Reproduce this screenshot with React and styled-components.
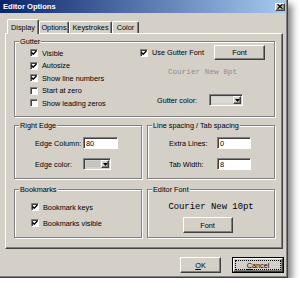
import React from 'react';
import styled, { createGlobalStyle, css } from 'styled-components';

const face = '#d4d0c8';
const shadow = '#808080';
const darkShadow = '#404040';
const highlight = '#ffffff';

const GlobalStyle = createGlobalStyle`
  html, body {
    margin: 0;
    padding: 0;
    background: #fff;
  }
  body {
    font-family: "Liberation Sans", Arial, sans-serif;
    font-size: 7.3px;
    line-height: 9px;
    color: #000;
  }
  * {
    box-sizing: border-box;
  }
`;

const raised = css`
  background: ${face};
  border-top: 1px solid ${highlight};
  border-left: 1px solid ${highlight};
  border-right: 1px solid ${darkShadow};
  border-bottom: 1px solid ${darkShadow};
  box-shadow: inset -1px -1px 0 ${shadow};
`;

const sunken = css`
  border-top: 1px solid ${shadow};
  border-left: 1px solid ${shadow};
  border-right: 1px solid ${highlight};
  border-bottom: 1px solid ${highlight};
  box-shadow: inset 1px 1px 0 ${darkShadow};
`;

const Window = styled.div`
  width: 288px;
  height: 278px;
  display: flex;
  flex-direction: column;
  background: ${face};
  border-right: 1px solid ${darkShadow};
  border-bottom: 1px solid ${darkShadow};
  box-shadow: inset -1px -1px 0 ${shadow}, 4px 4px 7px rgba(0, 0, 0, 0.5);
  padding-right: 1px;
`;

const TitleBar = styled.div`
  height: 13px;
  display: flex;
  align-items: center;
  justify-content: space-between;
  padding: 0 1px 0 3px;
  background: linear-gradient(90deg, #0a246a, #a6caf0);
  color: #fff;
  font-weight: bold;
  font-size: 7.6px;
`;

const CloseButton = styled.div`
  ${raised};
  width: 10px;
  height: 8px;
  display: flex;
  align-items: center;
  justify-content: center;
`;

const Body = styled.div`
  padding: 6px 2px 0 5px;
`;

const TabStrip = styled.div`
  height: 14px;
  display: flex;
  align-items: flex-end;
  padding-left: 2px;
`;

const Tab = styled.div`
  width: ${p => p.$w}px;
  height: ${p => (p.$active ? 15 : 12)}px;
  margin-bottom: ${p => (p.$active ? -1 : 0)}px;
  position: relative;
  z-index: ${p => (p.$active ? 1 : 0)};
  background: ${face};
  border-top: 1px solid ${highlight};
  border-left: 1px solid ${highlight};
  border-right: 1px solid ${darkShadow};
  border-radius: 2px 2px 0 0;
  box-shadow: inset -1px 0 0 ${shadow};
  display: flex;
  justify-content: center;
  padding-top: ${p => (p.$active ? 3 : 1)}px;
  font-size: 7.3px;
`;

const Panel = styled.div`
  width: 278px;
  display: flex;
  flex-direction: column;
  border-top: 1px solid ${highlight};
  border-left: 1px solid ${highlight};
  border-right: 1px solid ${darkShadow};
  border-bottom: 1px solid ${darkShadow};
  box-shadow: inset -1px -1px 0 ${shadow};
  padding: 7px 7px 10px 8px;
`;

const Row = styled.div`
  display: grid;
  grid-template-columns: 128px 128px;
  column-gap: 5px;
  margin-top: ${p => p.$gap}px;
`;

const Group = styled.div`
  position: relative;
  height: ${p => p.$h}px;
  border: 1px solid ${shadow};
  box-shadow: inset 1px 1px 0 ${highlight}, 1px 1px 0 ${highlight};
`;

const Caption = styled.span`
  position: absolute;
  top: -5px;
  left: 4px;
  padding: 0 1px;
  background: ${face};
  line-height: 9px;
`;

const GutterBody = styled.div`
  display: grid;
  grid-template-columns: 110px 125px;
  padding: 3px 0 0 15px;
`;

const CheckList = styled.div`
  display: flex;
  flex-direction: column;
  padding-top: ${p => p.$top || 0}px;
  padding-left: ${p => p.$left || 0}px;
  gap: ${p => p.$gap || 0}px;
`;

const CheckRow = styled.div`
  display: flex;
  align-items: center;
  gap: 4px;
  height: ${p => p.$h || 12.5}px;
`;

const Box = styled.span`
  width: 8px;
  height: 8px;
  flex: none;
  background: #fff;
  ${sunken};
  display: flex;
  align-items: center;
  justify-content: center;
`;

const FontColumn = styled.div`
  display: flex;
  flex-direction: column;
`;

const SpreadRow = styled.div`
  display: flex;
  align-items: center;
  justify-content: space-between;
`;

const Button = styled.div`
  ${raised};
  width: ${p => p.$w}px;
  height: ${p => p.$h}px;
  display: flex;
  align-items: center;
  justify-content: center;
  margin-top: ${p => p.$mt || 0}px;
  margin-right: ${p => p.$mr || 0}px;
`;

const DefaultButton = styled.div`
  width: ${p => p.$w}px;
  height: ${p => p.$h}px;
  border: 1px solid #000;
  display: flex;
`;

const DefaultInner = styled.div`
  ${raised};
  flex: 1;
  display: flex;
  padding: 1px;
`;

const FocusRect = styled.div`
  flex: 1;
  border: 1px dotted #000;
  display: flex;
  align-items: center;
  justify-content: center;
`;

const MonoText = styled.div`
  font-family: "Liberation Mono", "Courier New", monospace;
  font-size: ${p => p.$size}px;
  line-height: 10px;
  color: ${p => (p.$disabled ? '#8c8c8c' : '#000')};
  text-align: center;
  margin-top: ${p => p.$mt || 0}px;
`;

const ColorRow = styled.div`
  display: flex;
  align-items: center;
  margin-top: 17px;
`;

const ColorLabel = styled.span`
  width: 69px;
  padding-left: 17px;
`;

const Combo = styled.div`
  width: ${p => p.$w}px;
  height: 12px;
  display: flex;
  ${sunken};
  background: ${face};
  padding: 1px 1px 1px 2px;
`;

const Swatch = styled.div`
  flex: 1;
  background: ${p => p.$color};
  margin: 1px 1px 1px 0;
`;

const ArrowButton = styled.div`
  ${raised};
  width: 8px;
  display: flex;
  align-items: center;
  justify-content: center;
`;

const FieldGrid = styled.div`
  display: grid;
  grid-template-columns: 48px auto;
  grid-auto-rows: 12px;
  row-gap: 9px;
  align-items: center;
  padding: 11px 0 0 ${p => p.$left}px;
`;

const TextInput = styled.div`
  width: ${p => p.$w}px;
  height: 12px;
  background: #fff;
  ${sunken};
  padding-left: 2px;
  display: flex;
  align-items: center;
`;

const CenterColumn = styled.div`
  display: flex;
  flex-direction: column;
  align-items: center;
  padding-top: 12px;
`;

const Footer = styled.div`
  display: flex;
  justify-content: flex-end;
  gap: 11px;
  padding-top: 8px;
`;

const Check = () => (
  <svg width="6" height="6" viewBox="0 0 6 6">
    <path d="M0.6 2.6 L2.2 4.2 L5.4 1" fill="none" stroke="#000" strokeWidth="1.4" />
  </svg>
);

const Checkbox = ({ checked, label, h }) => (
  <CheckRow $h={h}>
    <Box>{checked && <Check />}</Box>
    <span>{label}</span>
  </CheckRow>
);

const Arrow = () => (
  <svg width="5" height="3" viewBox="0 0 5 3">
    <path d="M0 0 H5 L2.5 3 Z" fill="#000" />
  </svg>
);

const ColorCombo = ({ w, color }) => (
  <Combo $w={w}>
    <Swatch $color={color} />
    <ArrowButton>
      <Arrow />
    </ArrowButton>
  </Combo>
);

const tabs = [
  { label: 'Display', w: 32 },
  { label: 'Options', w: 30 },
  { label: 'Keystrokes', w: 43 },
  { label: 'Color', w: 27 },
];

const gutterChecks = [
  { label: 'Visible', checked: true },
  { label: 'Autosize', checked: true },
  { label: 'Show line numbers', checked: true },
  { label: 'Start at zero', checked: false },
  { label: 'Show leading zeros', checked: false },
];

export default function App() {
  return (
    <>
      <GlobalStyle />
      <Window>
        <TitleBar>
          <span>Editor Options</span>
          <CloseButton>
            <svg width="6" height="5" viewBox="0 0 6 5">
              <path d="M0.5 0.3 L5.5 4.7 M5.5 0.3 L0.5 4.7" stroke="#000" strokeWidth="1.3" />
            </svg>
          </CloseButton>
        </TitleBar>

        <Body>
          <TabStrip>
            {tabs.map((t, i) => (
              <Tab key={t.label} $w={t.w} $active={i === 0}>
                {t.label}
              </Tab>
            ))}
          </TabStrip>

          <Panel>
            <Group $h={76}>
              <Caption>Gutter</Caption>
              <GutterBody>
                <CheckList $top={2}>
                  {gutterChecks.map(c => (
                    <Checkbox key={c.label} label={c.label} checked={c.checked} />
                  ))}
                </CheckList>
                <FontColumn>
                  <SpreadRow>
                    <Checkbox label="Use Gutter Font" checked h={15} />
                    <Button $w={51} $h={15}>Font</Button>
                  </SpreadRow>
                  <MonoText $size={7.7} $mt={7} $disabled>
                    Courier New 8pt
                  </MonoText>
                  <ColorRow>
                    <ColorLabel>Gutter color:</ColorLabel>
                    <ColorCombo w={34} color="#dcdad6" />
                  </ColorRow>
                </FontColumn>
              </GutterBody>
            </Group>

            <Row $gap={8}>
              <Group $h={54}>
                <Caption>Right Edge</Caption>
                <FieldGrid $left={20}>
                  <span>Edge Column:</span>
                  <TextInput $w={35}>80</TextInput>
                  <span>Edge color:</span>
                  <ColorCombo w={28} color="#c4c4c4" />
                </FieldGrid>
              </Group>
              <Group $h={54}>
                <Caption>Line spacing / Tab spacing</Caption>
                <FieldGrid $left={21}>
                  <span>Extra Lines:</span>
                  <TextInput $w={34}>0</TextInput>
                  <span>Tab Width:</span>
                  <TextInput $w={34}>8</TextInput>
                </FieldGrid>
              </Group>
            </Row>

            <Row $gap={10}>
              <Group $h={49}>
                <Caption>Bookmarks</Caption>
                <CheckList $top={11} $left={16} $gap={4}>
                  <Checkbox label="Bookmark keys" checked h={12} />
                  <Checkbox label="Bookmarks visible" checked h={12} />
                </CheckList>
              </Group>
              <Group $h={49}>
                <Caption>Editor Font</Caption>
                <CenterColumn>
                  <MonoText $size={8.9}>Courier New 10pt</MonoText>
                  <Button $w={50} $h={16} $mt={5} $mr={7}>
                    Font
                  </Button>
                </CenterColumn>
              </Group>
            </Row>
          </Panel>

          <Footer>
            <Button $w={41} $h={16}>
              <span>
                <u>O</u>K
              </span>
            </Button>
            <DefaultButton $w={52} $h={16}>
              <DefaultInner>
                <FocusRect>
                  <span>
                    <u>C</u>ancel
                  </span>
                </FocusRect>
              </DefaultInner>
            </DefaultButton>
          </Footer>
        </Body>
      </Window>
    </>
  );
}
